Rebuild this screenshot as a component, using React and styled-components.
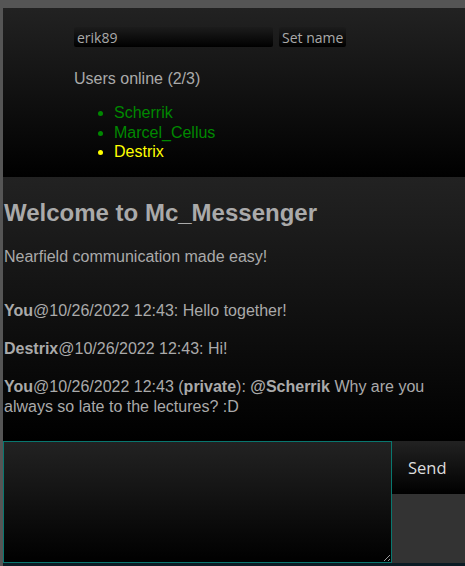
import React from "react";
import styled, { createGlobalStyle } from "styled-components";

const GlobalStyle = createGlobalStyle`
	html, body {
		margin: 0;
		background: #555;
		overflow: hidden;
	}
	body {
		padding: 8px 0 0 3px;
		font-family: "Liberation Sans", Arial, sans-serif;
		color: #aaa;
	}
`;

const Page = styled.div`
	width: 470px;
	display: flex;
	flex-direction: column;
`;

const Header = styled.header`
	height: 169px;
	box-sizing: border-box;
	padding: 19px 0 0 71px;
	background: linear-gradient(#222, #000);
`;

const NameRow = styled.div`
	display: flex;
	gap: 6px;
`;

const NameInput = styled.input`
	width: 199px;
	height: 20px;
	box-sizing: border-box;
	padding: 0 3px;
	border: none;
	border-radius: 2px;
	background: linear-gradient(#1c1c1c, #000);
	color: #aaa;
	font-family: "Open Sans", sans-serif;
	font-size: 14px;
	outline: none;
`;

const SmallButton = styled.button`
	height: 20px;
	padding: 0 3px;
	border: none;
	border-radius: 2px;
	background: linear-gradient(#1c1c1c, #000);
	color: #aaa;
	font-family: "Open Sans", sans-serif;
	font-size: 14px;
`;

const OnlineTitle = styled.div`
	margin-top: 23px;
	font-size: 16px;
`;

const UserList = styled.ul`
	margin: 15px 0 0;
	padding-left: 40px;
	font-size: 16px;
	line-height: 19.5px;
`;

const User = styled.li`
	color: ${(p) => (p.$self ? "#ff0" : "#080")};
`;

const Chat = styled.main`
	height: 264px;
	box-sizing: border-box;
	padding: 21px 1px 0;
	background: linear-gradient(#222, #000);
`;

const Title = styled.h2`
	margin: 0;
	font-size: 24px;
	line-height: 30px;
	font-weight: bold;
`;

const Subtitle = styled.p`
	margin: 20px 0 35px;
	font-size: 16px;
`;

const Message = styled.p`
	margin: 0 0 18px;
	font-size: 16px;
	line-height: 20px;
`;

const Composer = styled.div`
	display: flex;
	background: #333;
	height: 122px;
`;

const TextArea = styled.textarea`
	width: 389px;
	height: 122px;
	box-sizing: border-box;
	margin: 0;
	border: 1px solid #08776f;
	background: linear-gradient(#222, #000);
	color: #aaa;
	font-family: "Liberation Sans", sans-serif;
	font-size: 16px;
	padding: 2px;
	outline: none;
	caret-color: #aaa;
`;

const SendButton = styled.button`
	width: 80px;
	height: 53px;
	border: none;
	background: linear-gradient(#222, #000);
	color: #ddd;
	font-family: "Open Sans", sans-serif;
	font-size: 16.5px;
	text-align: left;
	padding: 0 0 0 16px;
`;

const Footer = styled.div`
	height: 10px;
	background: #0b1b24;
`;

export default function App() {
	return (
		<>
			<GlobalStyle />
			<Page>
				<Header>
					<NameRow>
						<NameInput defaultValue="erik89" />
						<SmallButton>Set name</SmallButton>
					</NameRow>
					<OnlineTitle>Users online (2/3)</OnlineTitle>
					<UserList>
						<User>Scherrik</User>
						<User>Marcel_Cellus</User>
						<User $self>Destrix</User>
					</UserList>
				</Header>
				<Chat>
					<Title>Welcome to Mc_Messenger</Title>
					<Subtitle>Nearfield communication made easy!</Subtitle>
					<Message>
						<b>You</b>@10/26/2022 12:43: Hello together!
					</Message>
					<Message>
						<b>Destrix</b>@10/26/2022 12:43: Hi!
					</Message>
					<Message>
						<b>You</b>@10/26/2022 12:43 (<b>private</b>): <b>@Scherrik</b> Why are you
						always so late to the lectures? :D
					</Message>
				</Chat>
				<Composer>
					<TextArea autoFocus />
					<SendButton>Send</SendButton>
				</Composer>
				<Footer />
			</Page>
		</>
	);
}
